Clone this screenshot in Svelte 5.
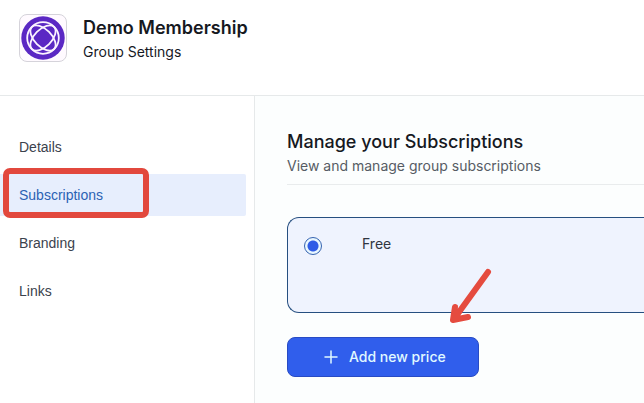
<!--
  GroupSettings

  Settings page of a membership group: header, section menu and
  the subscriptions panel.
-->
<script lang="ts">
  type Price = { id: string; name: string };

  const sections: string[] = ['Details', 'Subscriptions', 'Branding', 'Links'];
  const prices: Price[] = [{ id: 'free', name: 'Free' }];

  let activeSection = $state('Subscriptions');
  let selectedPrice = $state('free');

  function openSection(event: MouseEvent, section: string) {
    event.preventDefault();
    activeSection = section;
  }
</script>

<div class="page">
  <header class="header">
    <div class="logo">
      <svg viewBox="0 0 44 44" aria-hidden="true">
        <circle cx="22" cy="22" r="21.7" fill="#5b28c4" />
        <g fill="none" stroke="#fbf3ff" stroke-width="1.8">
          <circle cx="22" cy="22" r="15.8" />
          <ellipse cx="22" cy="22" rx="15.6" ry="8.6" transform="rotate(45 22 22)" />
          <ellipse cx="22" cy="22" rx="15.6" ry="8.6" transform="rotate(-45 22 22)" />
        </g>
      </svg>
    </div>
    <div>
      <h1>Demo Membership</h1>
      <p class="subtitle">Group Settings</p>
    </div>
  </header>

  <div class="body">
    <nav class="sidebar">
      {#each sections as section}
        <a
          class="section"
          class:active={section === activeSection}
          href="#{section.toLowerCase()}"
          onclick={(e) => openSection(e, section)}
        >
          {section}
          {#if section === 'Subscriptions'}
            <span class="marker"></span>
          {/if}
        </a>
      {/each}
    </nav>

    <main class="content">
      <div class="content-header">
        <h2>Manage your Subscriptions</h2>
        <p>View and manage group subscriptions</p>
      </div>

      {#each prices as price}
        <label class="price">
          <input type="radio" name="price" value={price.id} bind:group={selectedPrice} />
          <span>{price.name}</span>
        </label>
      {/each}

      <div class="actions">
        <button class="add-price" type="button">
          <svg class="plus" viewBox="0 0 14 14" aria-hidden="true">
            <path d="M7 1v12M1 7h12" />
          </svg>
          Add new price
        </button>
        <!-- Arrow pointing at the button -->
        <svg class="arrow" viewBox="0 0 44 60" aria-hidden="true">
          <path d="M39 5 5 52M6 40 4 53 19 50" />
        </svg>
      </div>
    </main>
  </div>
</div>

<style>
  :global(body) {
    margin: 0;
    background: #fff;
  }

  .page {
    min-height: 100vh;
    display: flex;
    flex-direction: column;
    overflow: hidden;
    font-family: Inter, 'Liberation Sans', sans-serif;
    font-size: 14px;
    line-height: 20px;
    color: #16191f;
  }

  h1,
  h2,
  p {
    margin: 0;
  }

  h1,
  h2 {
    font-size: 18px;
    line-height: 28px;
  }

  h1 {
    font-weight: 600;
  }

  h2 {
    font-weight: 500;
  }

  .header {
    display: flex;
    align-items: center;
    gap: 16px;
    padding: 14px 19px 33px;
    border-bottom: 1px solid #e6e9ea;
  }

  .logo {
    box-sizing: border-box;
    width: 48px;
    height: 48px;
    padding: 1px;
    border: 1px solid #d5d3da;
    border-radius: 8px;
    background: #fffaff;
  }

  .logo svg {
    display: block;
  }

  .body {
    flex: 1;
    display: flex;
  }

  .sidebar {
    flex: 0 0 246px;
    display: flex;
    flex-direction: column;
    gap: 6px;
    padding: 30px 8px 0 0;
    border-right: 1px solid #e6e9ea;
  }

  .section {
    position: relative;
    padding: 11px 19px;
    border-radius: 0 2px 2px 0;
    font-family: 'Liberation Sans', Arial, sans-serif;
    color: #3b424d;
    text-decoration: none;
  }

  .section.active {
    background: #e7eefd;
    color: #2b62b4;
  }

  .marker {
    position: absolute;
    box-sizing: border-box;
    top: -6px;
    left: 3px;
    width: 146px;
    height: 50px;
    border: 6px solid #e2483d;
    border-radius: 7px;
  }

  .content {
    flex: 1;
    min-width: 0;
    padding: 32px 0 26px 32px;
    background: #fcfefe;
  }

  .content-header {
    padding-bottom: 8px;
    border-bottom: 1px solid #e9eced;
    color: #565c64;
  }

  .content-header h2 {
    color: #16191f;
  }

  /* The card runs on past the right edge of the panel */
  .price {
    display: flex;
    align-items: flex-start;
    gap: 40px;
    box-sizing: border-box;
    min-height: 96px;
    margin-top: 32px;
    padding: 16px;
    border: 1px solid #264f80;
    border-right: 0;
    border-radius: 12px 0 0 12px;
    background: #eff3fe;
    color: #2f3540;
  }

  .price input {
    appearance: none;
    box-sizing: border-box;
    width: 18px;
    height: 18px;
    margin: 3px 0 0;
    border: 1px solid #3563b0;
    border-radius: 50%;
    background: #fff;
  }

  .price input:checked {
    background: radial-gradient(circle, #2f5ce6 5px, #e9f7ff 6px);
  }

  .actions {
    position: relative;
    width: 192px;
    margin-top: 24px;
  }

  .add-price {
    display: flex;
    align-items: center;
    gap: 11px;
    box-sizing: border-box;
    width: 100%;
    height: 40px;
    padding: 0 32px 0 36px;
    border: 1px solid #284bc4;
    border-radius: 8px;
    background: #305eec;
    color: #e0f9ff;
    font: inherit;
    font-weight: 500;
    white-space: nowrap;
    cursor: pointer;
  }

  .plus {
    width: 14px;
    height: 14px;
    fill: none;
    stroke: currentColor;
    stroke-width: 1.5;
    stroke-linecap: round;
  }

  .arrow {
    position: absolute;
    top: -70px;
    left: 162px;
    width: 44px;
    height: 60px;
    fill: none;
    stroke: #e54b3f;
    stroke-width: 6;
    stroke-linecap: round;
    stroke-linejoin: round;
    pointer-events: none;
  }
</style>
